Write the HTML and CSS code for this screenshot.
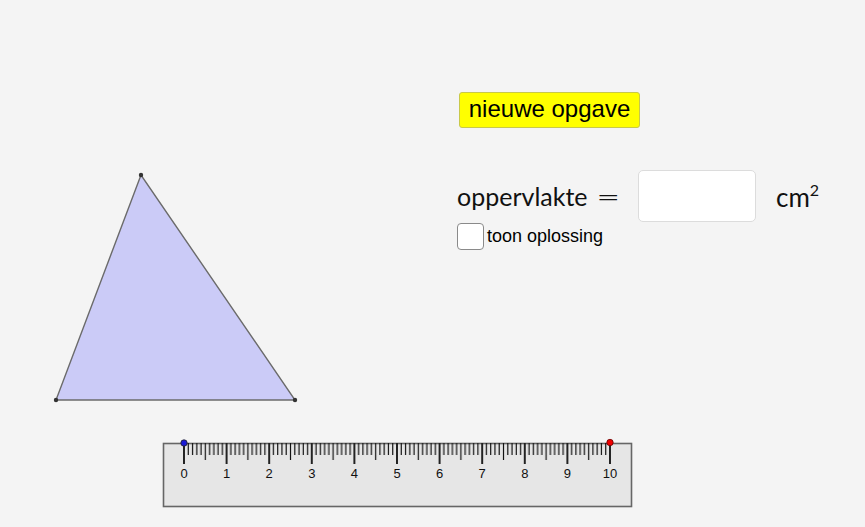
FILE: index.html
```html
<!DOCTYPE html>
<html>
<head>
<meta charset="utf-8">
<link rel="stylesheet" href="styles.css">
</head>
<body>
<div class="applet">
  <svg class="drawing" width="865" height="527" viewBox="0 0 865 527">
    <defs>
      <pattern id="mm" patternUnits="userSpaceOnUse" x="183" y="443" width="42.6" height="30">
        <g stroke="#111" stroke-width="1.2">
          <line x1="5.26" y1="0" x2="5.26" y2="12"/>
          <line x1="9.52" y1="0" x2="9.52" y2="12"/>
          <line x1="13.78" y1="0" x2="13.78" y2="12"/>
          <line x1="18.04" y1="0" x2="18.04" y2="12"/>
          <line x1="22.3" y1="0" x2="22.3" y2="17"/>
          <line x1="26.56" y1="0" x2="26.56" y2="12"/>
          <line x1="30.82" y1="0" x2="30.82" y2="12"/>
          <line x1="35.08" y1="0" x2="35.08" y2="12"/>
          <line x1="39.34" y1="0" x2="39.34" y2="12"/>
        </g>
        <line x1="1" y1="0" x2="1" y2="21" stroke="#222" stroke-width="2"/>
      </pattern>
    </defs>
    <polygon class="tri" points="141,175 56,400 295,400"/>
    <g class="pt">
      <circle cx="141" cy="175" r="2.2"/>
      <circle cx="56" cy="400" r="2.2"/>
      <circle cx="295" cy="400" r="2.2"/>
    </g>
    <rect class="ruler" x="163.5" y="443.5" width="468" height="63"/>
    <rect x="183" y="443" width="430" height="22" fill="url(#mm)"/>
    <g class="labels">
      <text x="184" y="478">0</text>
      <text x="226.6" y="478">1</text>
      <text x="269.2" y="478">2</text>
      <text x="311.8" y="478">3</text>
      <text x="354.4" y="478">4</text>
      <text x="397" y="478">5</text>
      <text x="439.6" y="478">6</text>
      <text x="482.2" y="478">7</text>
      <text x="524.8" y="478">8</text>
      <text x="567.4" y="478">9</text>
      <text x="610" y="478">10</text>
    </g>
    <circle cx="184" cy="443" r="3.2" fill="#1a1ad6" stroke="#222" stroke-width="0.8"/>
    <circle cx="610" cy="442.5" r="3.2" fill="#f00000" stroke="#600" stroke-width="0.8"/>
  </svg>

  <div class="panel">
    <button class="btn">nieuwe opgave</button>
    <div class="row">
      <span class="math">oppervlakte<span class="eq">=</span></span>
      <input class="answer" type="text">
      <span class="math unit">cm<sup>2</sup></span>
    </div>
    <label class="check"><span class="box"></span>toon oplossing</label>
  </div>
</div>
</body>
</html>
```

FILE: styles.css
```css
html, body {
  margin: 0;
  padding: 0;
  background: #f4f4f4;
}
.applet {
  position: relative;
  width: 865px;
  height: 527px;
  overflow: hidden;
  font-family: "Liberation Sans", Arial, sans-serif;
}
.drawing {
  position: absolute;
  left: 0;
  top: 0;
}
.tri {
  fill: #cbcbf7;
  stroke: #6b6b6b;
  stroke-width: 1.4;
}
.pt circle {
  fill: #333;
}
.ruler {
  fill: #e6e6e6;
  stroke: #666;
  stroke-width: 1.6;
}
.labels text {
  font-family: "Liberation Sans", Arial, sans-serif;
  font-size: 13px;
  fill: #111;
  text-anchor: middle;
}
.panel {
  position: absolute;
  left: 457px;
  top: 92px;
  display: flex;
  flex-direction: column;
  align-items: flex-start;
}
.btn {
  width: 181px;
  height: 36px;
  margin-left: 2px;
  padding: 0 0 2px 0;
  background: #ffff00;
  border: 1px solid #c8c84a;
  border-radius: 3px;
  font-family: "Liberation Sans", Arial, sans-serif;
  font-size: 24px;
  color: #000;
}
.row {
  display: flex;
  align-items: center;
  margin-top: 42px;
}
.math {
  font-family: "Lato", sans-serif;
  font-size: 25px;
  color: #111;
}
.eq {
  font-family: "DejaVu Sans", sans-serif;
  font-weight: 200;
  font-size: 28px;
  margin-left: 9px;
}
.answer {
  width: 118px;
  height: 52px;
  box-sizing: border-box;
  margin-left: 18px;
  border: 1px solid #dcdcdc;
  border-radius: 5px;
  background: #fff;
}
.unit {
  margin-left: 20px;
  font-size: 26px;
}
.unit sup {
  font-size: 16px;
  vertical-align: 11px;
}
.check {
  display: flex;
  align-items: center;
  margin-top: 1px;
  font-size: 18px;
  color: #000;
}
.box {
  width: 25px;
  height: 25px;
  border: 1px solid #8a8a8a;
  border-radius: 4px;
  background: #fff;
  margin-right: 3px;
}
```
